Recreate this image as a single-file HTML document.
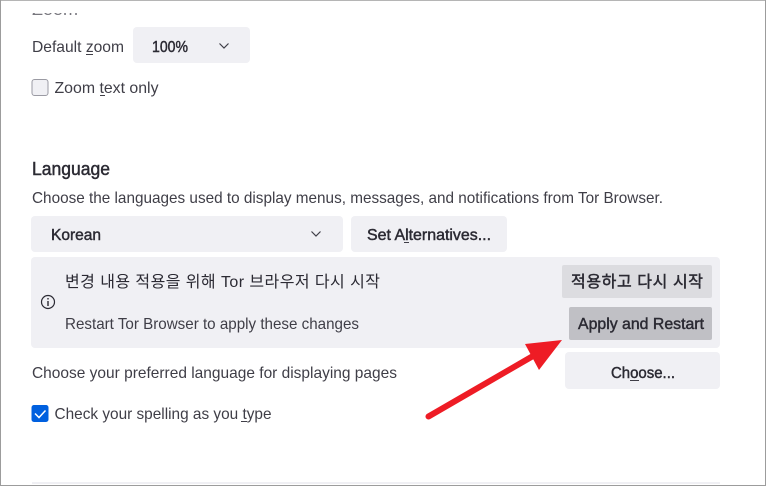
<!DOCTYPE html>
<html lang="en">
<head>
<meta charset="utf-8">
<title>Language settings</title>
<style>
html,body{margin:0;padding:0;background:#fff;width:766px;height:486px;overflow:hidden}
svg{display:block;position:absolute;left:0;top:0}
text{font-family:"Liberation Sans","Noto Sans CJK KR",sans-serif;font-size:16px;fill:#2b2a33}
.b{stroke:#2b2a33;stroke-width:.45px}
.g{fill:#3f3e47}
.s{filter:blur(.3px)}
</style>
</head>
<body>
<svg width="766" height="486" viewBox="0 0 766 486" xmlns="http://www.w3.org/2000/svg">
<defs><clipPath id="c"><rect x="0" y="13" width="766" height="2"/></clipPath></defs>
<rect width="766" height="486" fill="#fff"/>
<rect x="0" y="0" width="766" height="1" fill="#b5b5b5"/>
<rect x="0" y="0" width="1" height="486" fill="#9c9c9c"/>
<rect x="765" y="0" width="1" height="486" fill="#9c9c9c"/>
<rect x="0" y="485" width="766" height="1" fill="#9c9c9c"/>

<g clip-path="url(#c)"><text x="32" y="15" textLength="46" lengthAdjust="spacingAndGlyphs" style="font-size:17px;fill:#77767d">Zoom</text></g>

<g class="s">
<text x="32" y="52" textLength="92" lengthAdjust="spacingAndGlyphs" class="g">Default zoom</text>
<rect x="86" y="54" width="7" height="1" fill="#3f3e47"/>
<rect x="133" y="27" width="117" height="36" rx="4" fill="#f0f0f4"/>
<text x="152" y="52" textLength="36" lengthAdjust="spacingAndGlyphs" class="b">100%</text>
<path d="M219.500 43.500l4.500 4.500 4.500-4.500" fill="none" stroke="#3f3e47" stroke-width="1.200"/>

<rect x="32" y="79.500" width="16" height="16" rx="2.500" fill="#f0f0f4" stroke="#9a9aa3"/>
<text x="54.500" y="93" textLength="104" lengthAdjust="spacingAndGlyphs" class="g">Zoom text only</text>
<rect x="100" y="95" width="5" height="1" fill="#3f3e47"/>

<text x="32" y="175" textLength="78" lengthAdjust="spacingAndGlyphs" class="b" style="font-size:18px">Language</text>
<text x="32" y="203" textLength="631" lengthAdjust="spacingAndGlyphs" class="g">Choose the languages used to display menus, messages, and notifications from Tor Browser.</text>

<rect x="31" y="216" width="312" height="36" rx="4" fill="#f0f0f4"/>
<text x="51" y="240" textLength="50" lengthAdjust="spacingAndGlyphs" class="b">Korean</text>
<path d="M311.500 231.500l4.500 4.500 4.500-4.500" fill="none" stroke="#3f3e47" stroke-width="1.200"/>
<rect x="351" y="216" width="156" height="36" rx="4" fill="#f0f0f4"/>
<text x="367" y="240" textLength="124" lengthAdjust="spacingAndGlyphs" class="b">Set Alternatives...</text>
<rect x="404" y="242" width="5" height="1" fill="#3f3e47"/>

<rect x="31" y="257" width="689" height="91" rx="4" fill="#f0f0f4"/>
<circle cx="48" cy="302" r="6.500" fill="none" stroke="#2b2a33" stroke-width="1.200"/>
<rect x="47.300" y="301" width="1.400" height="5" fill="#2b2a33"/>
<rect x="47.300" y="298" width="1.400" height="1.500" fill="#2b2a33"/>
<text x="65" y="287" textLength="315" lengthAdjust="spacing">변경 내용 적용을 위해 Tor 브라우저 다시 시작</text>
<text x="65" y="329" textLength="294" lengthAdjust="spacingAndGlyphs" class="g">Restart Tor Browser to apply these changes</text>

<rect x="562" y="265" width="150" height="33" rx="2" fill="#dcdce0"/>
<text x="571" y="287" textLength="132" lengthAdjust="spacing" class="b">적용하고 다시 시작</text>
<rect x="569" y="307" width="143" height="33" rx="2" fill="#c0c0c5"/>
<text x="578" y="329" textLength="126" lengthAdjust="spacingAndGlyphs" class="b">Apply and Restart</text>

<text x="32" y="378" textLength="365" lengthAdjust="spacingAndGlyphs" class="g">Choose your preferred language for displaying pages</text>
<rect x="565" y="352" width="155" height="37" rx="4" fill="#f0f0f4"/>
<text x="611" y="378" textLength="64" lengthAdjust="spacingAndGlyphs" class="b">Choose...</text>
<rect x="630" y="380" width="9" height="1" fill="#3f3e47"/>

<rect x="31.500" y="405" width="17" height="17" rx="2.500" fill="#0060df"/>
<path d="M35 413.500l4 4 6.500-7" fill="none" stroke="#fff" stroke-width="1.500"/>
<text x="54.500" y="419" textLength="217" lengthAdjust="spacingAndGlyphs" class="g">Check your spelling as you type</text>
<rect x="241" y="421" width="6" height="1" fill="#3f3e47"/>

<rect x="32" y="482" width="688" height="2" fill="#f0f0f4"/>

<path d="M428.500 416.500L533 356" fill="none" stroke="#ee1c25" stroke-width="6" stroke-linecap="round"/>
<path d="M562 340L525 344L539 370Z" fill="#ee1c25"/>
</g>
</svg>
</body>
</html>
